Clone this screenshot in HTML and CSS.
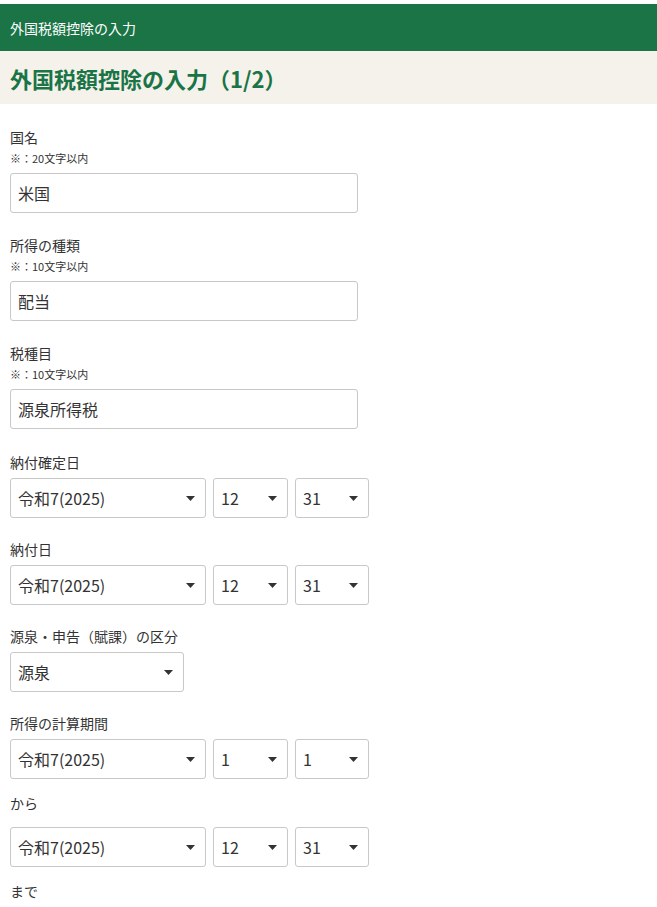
FILE: index.html
```html
<!DOCTYPE html>
<html lang="ja">
<head>
<meta charset="utf-8">
<title>外国税額控除の入力</title>
<link rel="stylesheet" href="styles.css">
</head>
<body>
<header class="topbar">外国税額控除の入力</header>
<div class="titlebar"><h1 class="title">外国税額控除の入力（1/2）</h1></div>
<main class="form">
  <div class="field text-field">
    <div class="label">国名</div>
    <div class="note">※：20文字以内</div>
    <div class="input after-note">米国</div>
  </div>
  <div class="field text-field">
    <div class="label">所得の種類</div>
    <div class="note">※：10文字以内</div>
    <div class="input after-note">配当</div>
  </div>
  <div class="field text-field last-text">
    <div class="label">税種目</div>
    <div class="note">※：10文字以内</div>
    <div class="input after-note">源泉所得税</div>
  </div>
  <div class="field select-field">
    <div class="label">納付確定日</div>
    <div class="row">
      <div class="select era"><span>令和7(2025)</span><svg class="arrow" width="9" height="5" viewBox="0 0 9 5"><path d="M0 0H9L4.5 5Z"/></svg></div>
      <div class="select month"><span>12</span><svg class="arrow" width="9" height="5" viewBox="0 0 9 5"><path d="M0 0H9L4.5 5Z"/></svg></div>
      <div class="select day"><span>31</span><svg class="arrow" width="9" height="5" viewBox="0 0 9 5"><path d="M0 0H9L4.5 5Z"/></svg></div>
    </div>
  </div>
  <div class="field select-field">
    <div class="label">納付日</div>
    <div class="row">
      <div class="select era"><span>令和7(2025)</span><svg class="arrow" width="9" height="5" viewBox="0 0 9 5"><path d="M0 0H9L4.5 5Z"/></svg></div>
      <div class="select month"><span>12</span><svg class="arrow" width="9" height="5" viewBox="0 0 9 5"><path d="M0 0H9L4.5 5Z"/></svg></div>
      <div class="select day"><span>31</span><svg class="arrow" width="9" height="5" viewBox="0 0 9 5"><path d="M0 0H9L4.5 5Z"/></svg></div>
    </div>
  </div>
  <div class="field select-field">
    <div class="label">源泉・申告（賦課）の区分</div>
    <div class="row">
      <div class="select kubun"><span>源泉</span><svg class="arrow" width="9" height="5" viewBox="0 0 9 5"><path d="M0 0H9L4.5 5Z"/></svg></div>
    </div>
  </div>
  <div class="field select-field">
    <div class="label">所得の計算期間</div>
    <div class="row">
      <div class="select era"><span>令和7(2025)</span><svg class="arrow" width="9" height="5" viewBox="0 0 9 5"><path d="M0 0H9L4.5 5Z"/></svg></div>
      <div class="select month"><span>1</span><svg class="arrow" width="9" height="5" viewBox="0 0 9 5"><path d="M0 0H9L4.5 5Z"/></svg></div>
      <div class="select day"><span>1</span><svg class="arrow" width="9" height="5" viewBox="0 0 9 5"><path d="M0 0H9L4.5 5Z"/></svg></div>
    </div>
    <div class="label between">から</div>
    <div class="row">
      <div class="select era"><span>令和7(2025)</span><svg class="arrow" width="9" height="5" viewBox="0 0 9 5"><path d="M0 0H9L4.5 5Z"/></svg></div>
      <div class="select month"><span>12</span><svg class="arrow" width="9" height="5" viewBox="0 0 9 5"><path d="M0 0H9L4.5 5Z"/></svg></div>
      <div class="select day"><span>31</span><svg class="arrow" width="9" height="5" viewBox="0 0 9 5"><path d="M0 0H9L4.5 5Z"/></svg></div>
    </div>
    <div class="label after">まで</div>
  </div>
</main>
</body>
</html>
```
FILE: styles.css
```css
* { box-sizing: border-box; }
html, body { margin: 0; padding: 0; background: #fff; }
body {
  padding-top: 4px;
  font-family: "Noto Sans CJK JP", "Noto Sans", sans-serif;
  color: #333;
}
.topbar {
  background: #1a7446;
  color: #fff;
  height: 47px;
  padding: 0 10px;
  display: flex;
  align-items: center;
  font-size: 14px;
}
.titlebar {
  background: #f5f2ec;
  height: 53px;
  padding: 0 10px;
  display: flex;
  align-items: center;
}
.title {
  margin: 0;
  font-size: 22px;
  font-weight: bold;
  color: #1a7446;
  line-height: 1;
}
.form { padding: 23px 10px 0; }
.text-field { margin-bottom: 22px; }
.last-text { margin-bottom: 23px; }
.select-field { margin-bottom: 21px; }
.label { font-size: 14px; line-height: 20px; }
.note { font-size: 11px; line-height: 16px; margin-top: 3px; }
.input {
  width: 348px;
  height: 40px;
  border: 1px solid #c8c8c8;
  border-radius: 3px;
  font-size: 16px;
  padding: 0 7px;
  display: flex;
  align-items: center;
}
.after-note { margin-top: 7px; }
.row { display: flex; gap: 7px; margin-top: 6px; }
.select {
  height: 40px;
  border: 1px solid #c8c8c8;
  border-radius: 3px;
  font-size: 16px;
  padding: 0 10px 0 7px;
  display: flex;
  align-items: center;
  justify-content: space-between;
}
.arrow { fill: #333; flex: none; }
.era { width: 196px; }
.month { width: 75px; }
.day { width: 74px; }
.kubun { width: 174px; }
.between { margin-top: 14px; margin-bottom: -6px; padding-bottom: 14px; }
.after { margin-top: 14px; }
```
